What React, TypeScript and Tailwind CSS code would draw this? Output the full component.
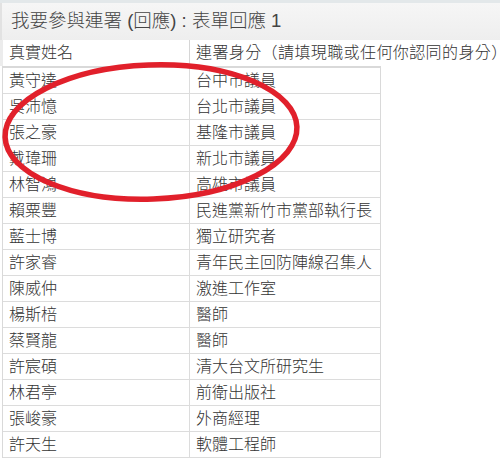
const rows = [
  ["黃守達", "台中市議員"],
  ["吳沛憶", "台北市議員"],
  ["張之豪", "基隆市議員"],
  ["戴瑋珊", "新北市議員"],
  ["林智鴻", "高雄市議員"],
  ["賴粟豐", "民進黨新竹市黨部執行長"],
  ["藍士博", "獨立研究者"],
  ["許家睿", "青年民主回防陣線召集人"],
  ["陳威仲", "激進工作室"],
  ["楊斯棓", "醫師"],
  ["蔡賢龍", "醫師"],
  ["許宸碩", "清大台文所研究生"],
  ["林君亭", "前衛出版社"],
  ["張峻豪", "外商經理"],
  ["許天生", "軟體工程師"],
];

const font = { fontFamily: "'Liberation Sans', 'Noto Sans CJK TC', sans-serif" };

export default function App() {
  return (
    <div
      className="relative w-[500px] h-[464px] overflow-hidden bg-white text-[#333] font-light"
      style={font}
    >
      {/* top strip */}
      <div className="h-[3px] bg-[#e3e8ea]" />

      {/* title bar */}
      <div className="h-[37px] flex items-center pl-[9px] bg-gradient-to-b from-[#f6f6f6] to-[#eeeeee] border-l-2 border-[#e2e2e2] text-[18.5px] leading-none text-[#444] whitespace-nowrap">
        我要參與連署 (回應) : 表單回應 1
      </div>

      {/* header row */}
      <div className="h-[26px] flex text-[16px] leading-none whitespace-nowrap bg-white">
        <div className="w-[190px] shrink-0 pl-[6px] flex items-center border-l-[3px] border-r border-l-[#ececec] border-r-[#d6d6d6]">
          真實姓名
        </div>
        <div className="flex-1 pl-[6px] flex items-center overflow-hidden tracking-[0.4px] [text-spacing-trim:space-all]">
          連署身分（請填現職或任何你認同的身分）
        </div>
      </div>

      {/* data rows */}
      <div className="w-[379px] ml-[2px] border-t-2 border-l border-r border-[#d9d9d9]">
        {rows.map(([name, role]) => (
          <div
            key={name}
            className="h-[26px] flex border-b border-[#dcdcdc] text-[16px] leading-none whitespace-nowrap"
          >
            <div className="w-[187px] shrink-0 pl-[6px] flex items-center border-r border-[#dcdcdc]">
              {name}
            </div>
            <div className="flex-1 pl-[6px] flex items-center overflow-hidden">
              {role}
            </div>
          </div>
        ))}
      </div>

      {/* hand-drawn red circle */}
      <svg
        className="absolute top-0 left-0 pointer-events-none"
        width="500"
        height="464"
        viewBox="0 0 500 464"
      >
        <ellipse
          cx="151"
          cy="132"
          rx="146"
          ry="67"
          fill="none"
          stroke="#e1202b"
          strokeWidth="5.5"
          transform="rotate(-2 151 132)"
        />
      </svg>
    </div>
  );
}
